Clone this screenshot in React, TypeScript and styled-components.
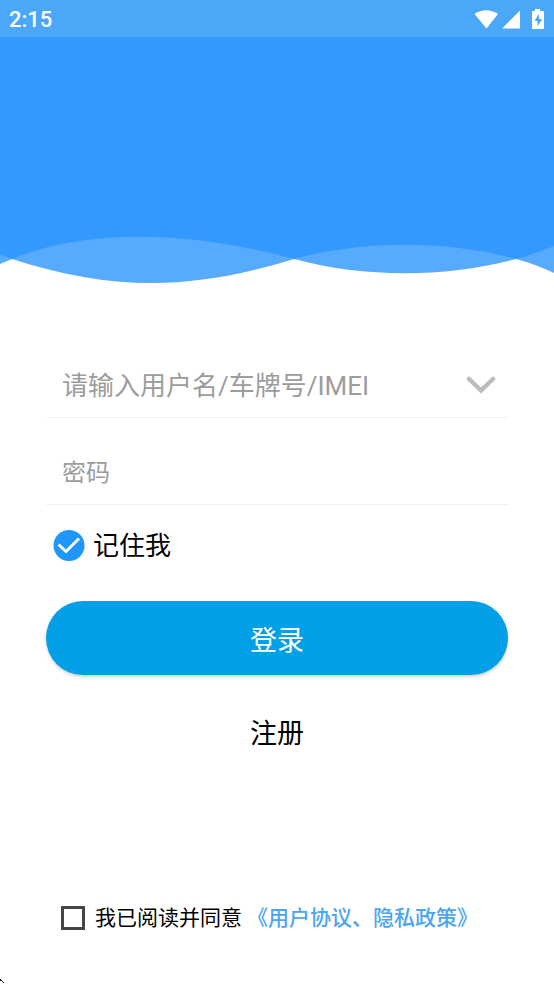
import { useState } from "react";
import styled, { createGlobalStyle } from "styled-components";

const GlobalStyle = createGlobalStyle`
  *, *::before, *::after { box-sizing: border-box; }
  body {
    margin: 0;
    background: #ffffff;
    font-family: Roboto, "Noto Sans CJK SC", sans-serif;
  }
  button, input { font: inherit; }
`;

const Screen = styled.div`
  position: relative;
  display: flex;
  flex-direction: column;
  min-height: 100vh;
  background: #ffffff;
`;

const StatusBar = styled.div`
  display: flex;
  align-items: center;
  justify-content: space-between;
  height: 37px;
  padding: 0 8px 0 9px;
  background: #4ba7f8;
  color: #ffffff;
`;

const Clock = styled.time`
  padding-top: 2px;
  font-size: 22px;
  line-height: 32px;
  font-weight: 500;
`;

const StatusIcons = styled.svg`
  display: block;
  width: 72px;
  height: 24px;
`;

const Waves = styled.svg`
  display: block;
  width: 100%;
  height: 247px;
`;

const Form = styled.form`
  display: flex;
  flex: 1;
  flex-direction: column;
  padding: 70px 46px 50px;
`;

const Field = styled.div`
  display: flex;
  align-items: center;
  height: 64px;
  padding: 0 12px 0 16px;
  border-bottom: 1px solid #f0f0f0;

  & + & {
    margin-top: 23px;
  }
`;

const TextInput = styled.input<{ $size: number }>`
  flex: 1;
  min-width: 0;
  height: 48px;
  padding: 0;
  border: 0;
  outline: 0;
  background: transparent;
  color: #000000;
  font-size: ${(p) => p.$size}px;

  &::placeholder {
    color: #9c9c9c;
    opacity: 1;
  }
`;

const IconButton = styled.button`
  display: flex;
  padding: 0;
  border: 0;
  background: none;
  cursor: pointer;
`;

const Remember = styled.label`
  display: flex;
  align-items: center;
  align-self: flex-start;
  gap: 8px;
  height: 32px;
  margin: 25px 0 39px 7px;
  color: #000000;
  font-size: 26px;
  line-height: 32px;
`;

const RoundCheck = styled.input`
  appearance: none;
  width: 32px;
  height: 32px;
  margin: 0;
  border: 1px solid #1e96fa;
  border-radius: 50%;

  &:checked {
    display: none;
  }
`;

const LoginButton = styled.button`
  height: 74px;
  padding: 0;
  border: 0;
  border-radius: 37px;
  background: #03a0e8;
  box-shadow: 0 2px 3px rgba(0, 0, 0, 0.18);
  color: #ffffff;
  font-size: 27px;
  cursor: pointer;
`;

const RegisterButton = styled.button`
  align-self: center;
  height: 48px;
  margin-top: 35px;
  padding: 0 16px;
  border: 0;
  background: none;
  color: #000000;
  font-size: 27px;
  line-height: 48px;
  cursor: pointer;
`;

const Agreement = styled.div`
  display: flex;
  align-items: center;
  margin-top: auto;
  padding-left: 15px;
  font-size: 21px;
  line-height: 32px;
  white-space: nowrap;
`;

const AgreementLabel = styled.label`
  display: flex;
  align-items: center;
  gap: 10px;
  color: #000000;
`;

const SquareCheck = styled.input`
  appearance: none;
  width: 24px;
  height: 24px;
  margin: 0;
  border: 3px solid #454545;

  &:checked {
    background: #454545;
  }
`;

const PolicyLink = styled.a`
  margin-left: 5px;
  color: #4ba5f2;
  font-weight: 500;
  text-decoration: none;
`;

const CornerMark = styled.svg`
  position: absolute;
  left: 0;
  bottom: 0;
`;

export default function App() {
  const [remember, setRemember] = useState(true);

  return (
    <>
      <GlobalStyle />
      <Screen>
        <header>
          <StatusBar>
            <Clock>2:15</Clock>
            <StatusIcons viewBox="0 0 72 24" fill="#ffffff" aria-hidden="true">
              <path d="M0.500 7 Q12 -0.500 24 7 L12.500 21.500 Z" />
              <path d="M46 3.500 V21.500 H28 Z" />
              <path
                fillRule="evenodd"
                d="M61 2 h5 v2 h3 q1 0 1 1 v16 q0 1 -1 1 h-10 q-1 0 -1 -1 v-16 q0 -1 1 -1 h2 Z M65 7 L60.500 14 H63.500 V19.500 L68 12 H65 Z"
              />
            </StatusIcons>
          </StatusBar>
          <Waves viewBox="0 37 554 247" preserveAspectRatio="none" aria-hidden="true">
            <path
              fill="#57abff"
              d="M0 37 V264 L12 259 C112 291 190 291 294 259 C364 278 446 278 516 259 Q535 264 554 273 V37 Z"
            />
            <path
              fill="#3399ff"
              d="M0 37 V254 L12 259 C90 227 194 232 294 259 C364 240 446 240 516 259 Q535 254 554 246 V37 Z"
            />
          </Waves>
        </header>

        <Form onSubmit={(e) => e.preventDefault()}>
          <Field>
            <TextInput
              $size={26}
              type="text"
              aria-label="用户名"
              placeholder="请输入用户名/车牌号/IMEI"
            />
            <IconButton type="button" aria-label="选择账号">
              <svg width="30" height="20" viewBox="0 0 30 20" fill="none">
                <path
                  d="M3 3 L15 14.500 L27 3"
                  stroke="#bcbcbc"
                  strokeWidth="4.500"
                  strokeLinecap="round"
                />
              </svg>
            </IconButton>
          </Field>
          <Field>
            <TextInput $size={24} type="password" aria-label="密码" placeholder="密码" />
          </Field>

          <Remember>
            <RoundCheck
              type="checkbox"
              checked={remember}
              onChange={(e) => setRemember(e.target.checked)}
            />
            {remember && (
              <svg width="32" height="32" viewBox="0 0 32 32" fill="none" aria-hidden="true">
                <circle cx="16" cy="15.500" r="15.500" fill="#1e96fa" />
                <path d="M5.500 14.500 L13 21.500 L26 8.500" stroke="#ffffff" strokeWidth="3" />
              </svg>
            )}
            记住我
          </Remember>

          <LoginButton type="submit">登录</LoginButton>
          <RegisterButton type="button">注册</RegisterButton>

          <Agreement>
            <AgreementLabel>
              <SquareCheck type="checkbox" />
              我已阅读并同意
            </AgreementLabel>
            <PolicyLink href="#policy">《用户协议、隐私政策》</PolicyLink>
          </Agreement>
        </Form>

        <CornerMark width="5" height="5" viewBox="0 0 5 5" aria-hidden="true">
          <path d="M0 0 h1 v1 h1 v1 h1 v1 h1 v1 h-1 v-1 h-1 v-1 h-2 Z" fill="#111111" />
        </CornerMark>
      </Screen>
    </>
  );
}
